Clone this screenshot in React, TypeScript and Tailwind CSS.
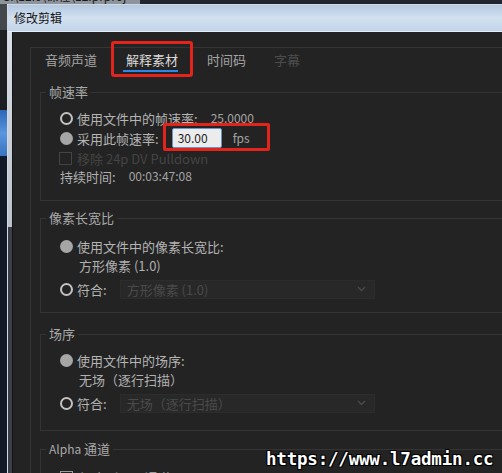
import type { ReactNode } from "react";

// --- 单选按钮 ---
const Radio = ({ checked }: { checked?: boolean }) =>
  checked ? (
    <span className="w-[13px] h-[13px] rounded-full bg-[#a6a6a6] shrink-0" />
  ) : (
    <span className="w-[13px] h-[13px] rounded-full border-2 border-[#c2c2c2] shrink-0" />
  );

// --- 分组框 ---
const Group = ({
  title,
  className,
  children,
}: {
  title: ReactNode;
  className: string;
  children: ReactNode;
}) => (
  <fieldset className={`border border-[#343434] ${className}`}>
    <legend className="ml-[5px] px-[3px] h-[18px] leading-[18px] text-[13px] text-[#a9a9a9]">
      {title}
    </legend>
    <div className="pl-[19px] flex flex-col">{children}</div>
  </fieldset>
);

// --- 禁用的下拉框 ---
const Dropdown = ({ value }: { value: string }) => (
  <div className="ml-[13px] w-[255px] h-[19px] bg-[#282828] border border-[#2c2c2c] flex items-center justify-between pl-[6px] pr-[8px]">
    <span className="text-[13px] text-[#4a4a4a] leading-none">{value}</span>
    <svg width="9" height="6" viewBox="0 0 9 6">
      <path d="M1 1l3.5 3.5L8 1" stroke="#4a4a4a" strokeWidth="1.3" fill="none" />
    </svg>
  </div>
);

export default function App() {
  return (
    <div className="w-[502px] h-[473px] overflow-hidden flex flex-col bg-[#1b1d21] font-['Noto_Sans_CJK_SC','Noto_Sans',sans-serif]">
      {/* 背后窗口的标题残影 */}
      <div className="h-[4px] overflow-hidden flex bg-[#20262f]">
        <div className="w-[140px] bg-[#8d949c] overflow-hidden">
          <div className="-mt-[13px] text-[12px] text-[#1a1a1a] whitespace-nowrap pl-[2px]">
            G:\12.0\课程\12.prproj
          </div>
        </div>
      </div>

      <div className="flex flex-1 min-h-0">
        {/* 桌面左侧 */}
        <div className="w-[7px] flex flex-col shrink-0">
          <div className="h-[26px] bg-[#44474c]" />
          <div className="h-[80px] bg-[#1c1e22]" />
          <div className="h-[46px] bg-linear-to-b from-[#2b66b8] via-[#5b95dc] to-[#3a74c2]" />
          <div className="h-[6px] bg-[#0f1a2c]" />
          <div className="flex-1 bg-[#131a27]" />
        </div>

        {/* 修改剪辑 窗口 */}
        <div className="flex-1 flex flex-col border-l border-t border-[#d4d9df] min-w-0">
          <div className="h-[27px] shrink-0 bg-linear-to-b from-[#b4c9e2] via-[#d2e0f0] to-[#c3d5ea] border-b border-[#e8eef5] flex items-center pl-[6px]">
            <span className="text-[12px] text-[#151515] leading-none -mt-[1px]">修改剪辑</span>
          </div>

          <div className="flex flex-1 min-h-0">
            <div className="w-[4px] flex flex-col shrink-0">
              <div className="h-[195px] bg-linear-to-b from-[#d8dfe8] to-[#bcc2c9]" />
              <div className="flex-1 bg-[#3b3f46]" />
            </div>

            <div className="flex-1 min-w-0 overflow-hidden bg-[#232323] border-l border-[#141414] pl-[17px] pt-[15px]">
              {/* 选项卡面板 */}
              <div className="w-[560px] h-[600px] border-l border-t border-[#353535] flex flex-col">
                <div className="flex items-start pt-[3px]">
                  <div className="px-[14px] flex flex-col">
                    <span className="text-[13px] leading-[18px] text-[#a3a3a3]">音频声道</span>
                  </div>
                  <div className="relative px-[15px] flex flex-col">
                    <span className="text-[13px] leading-[18px] text-[#dadada]">解释素材</span>
                    <span className="mt-[1px] h-[2px] -ml-[3px] bg-[#2e86e6]" />
                    <span className="absolute left-0 right-0 -top-[10px] -bottom-[5px] border-[3px] border-[#e3241d] rounded-[3px]" />
                  </div>
                  <div className="px-[14px] flex flex-col">
                    <span className="text-[13px] leading-[18px] text-[#a3a3a3]">时间码</span>
                  </div>
                  <div className="px-[14px] flex flex-col">
                    <span className="text-[13px] leading-[18px] text-[#4c4c4c]">字幕</span>
                  </div>
                </div>

                <div className="pl-[9px] flex flex-col">
                  {/* 帧速率 */}
                  <Group title="帧速率" className="mt-[11px] pb-[16px]">
                    <div className="mt-[7px] h-[20px] flex items-center">
                      <Radio />
                      <span className="ml-[4px] text-[13px] text-[#b4b4b4] leading-none">
                        使用文件中的帧速率:
                      </span>
                      <span className="ml-[13px] text-[12px] text-[#a4a4a4] leading-none">
                        25.0000
                      </span>
                    </div>
                    <div className="h-[20px] flex items-center">
                      <Radio checked />
                      <span className="ml-[4px] text-[13px] text-[#b4b4b4] leading-none">
                        采用此帧速率:
                      </span>
                      <div className="relative ml-[13px] flex items-center">
                        <div className="w-[50px] h-[20px] bg-[#ececec] border border-[#6d93c4] rounded-[2px] flex items-center pl-[5px]">
                          <span className="text-[12px] text-[#1e1e1e] leading-none">30.00</span>
                        </div>
                        <span className="ml-[11px] text-[12px] text-[#a4a4a4] leading-none">fps</span>
                        <span className="absolute -left-[9px] -right-[20px] -top-[5px] -bottom-[3px] border-[3px] border-[#e3241d] rounded-[2px]" />
                      </div>
                    </div>
                    <div className="h-[20px] flex items-center">
                      <span className="w-[13px] h-[13px] border border-[#444444] -ml-[1px] shrink-0" />
                      <span className="ml-[5px] text-[13px] text-[#444444] leading-none">
                        移除 24p DV Pulldown
                      </span>
                    </div>
                    <div className="h-[16px] flex items-center">
                      <span className="text-[13px] text-[#b0b0b0] leading-none">持续时间:</span>
                      <span className="ml-[13px] text-[12px] text-[#a4a4a4] leading-none">
                        00:03:47:08
                      </span>
                    </div>
                  </Group>

                  {/* 像素长宽比 */}
                  <Group title="像素长宽比" className="mt-[8px] pb-[13px]">
                    <div className="mt-[9px] h-[20px] flex items-center">
                      <Radio checked />
                      <span className="ml-[4px] text-[13px] text-[#b4b4b4] leading-none">
                        使用文件中的像素长宽比:
                      </span>
                    </div>
                    <div className="h-[19px] flex items-center pl-[19px]">
                      <span className="text-[13px] text-[#b0b0b0] leading-none">方形像素 (1.0)</span>
                    </div>
                    <div className="mt-[4px] h-[20px] flex items-center">
                      <Radio />
                      <span className="ml-[4px] text-[13px] text-[#b4b4b4] leading-none">符合:</span>
                      <Dropdown value="方形像素 (1.0)" />
                    </div>
                  </Group>

                  {/* 场序 */}
                  <Group title="场序" className="mt-[12px] pb-[17px]">
                    <div className="mt-[7px] h-[20px] flex items-center">
                      <Radio checked />
                      <span className="ml-[4px] text-[13px] text-[#b4b4b4] leading-none">
                        使用文件中的场序:
                      </span>
                    </div>
                    <div className="h-[19px] flex items-center pl-[19px]">
                      <span className="text-[13px] text-[#b0b0b0] leading-none">无场（逐行扫描）</span>
                    </div>
                    <div className="mt-[4px] h-[20px] flex items-center">
                      <Radio />
                      <span className="ml-[4px] text-[13px] text-[#b4b4b4] leading-none">符合:</span>
                      <Dropdown value="无场（逐行扫描）" />
                    </div>
                  </Group>

                  {/* Alpha 通道 */}
                  <Group
                    title={
                      <>
                        <span className="text-[12px]">Alpha</span> 通道
                      </>
                    }
                    className="mt-[9px] pb-[40px]"
                  >
                    <div className="mt-[9px] h-[20px] flex items-center">
                      <span className="w-[13px] h-[13px] border border-[#9a9a9a] shrink-0" />
                      <span className="ml-[5px] text-[13px] text-[#b4b4b4] leading-none">
                        忽略 Alpha 通道
                      </span>
                    </div>
                  </Group>
                </div>
              </div>
            </div>
          </div>
        </div>
      </div>

      {/* 水印 */}
      <div className="absolute left-[266px] top-[449px] text-[17.5px] font-bold text-white font-['DejaVu_Sans_Mono',monospace] tracking-[-0.2px] leading-[20px] [text-shadow:1px_1px_0_#000,-1px_-1px_0_#000,1px_-1px_0_#000,-1px_1px_0_#000]">
        https://www.l7admin.cc
      </div>
    </div>
  );
}
